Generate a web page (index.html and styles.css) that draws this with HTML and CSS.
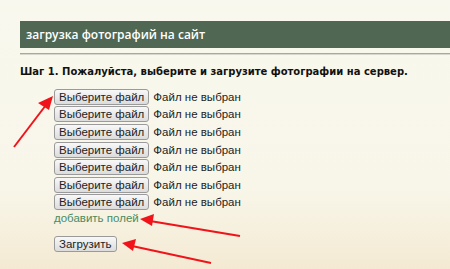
FILE: index.html
```html
<!DOCTYPE html>
<html lang="ru">
<head>
    <meta charset="UTF-8">
    <title>Загрузка фотографий</title>
    <link rel="stylesheet" href="styles.css">
</head>
<body>
    <div class="page">
        <div class="title-bar">загрузка фотографий на сайт</div>
        <div class="title-rule"></div>

        <h3 class="step">Шаг 1. Пожалуйста, выберите и загрузите фотографии на сервер.</h3>

        <form class="upload-form">
            <div class="file-row"><button type="button" class="file-btn">Выберите файл</button><span class="file-name">Файл не выбран</span></div>
            <div class="file-row"><button type="button" class="file-btn">Выберите файл</button><span class="file-name">Файл не выбран</span></div>
            <div class="file-row"><button type="button" class="file-btn">Выберите файл</button><span class="file-name">Файл не выбран</span></div>
            <div class="file-row"><button type="button" class="file-btn">Выберите файл</button><span class="file-name">Файл не выбран</span></div>
            <div class="file-row"><button type="button" class="file-btn">Выберите файл</button><span class="file-name">Файл не выбран</span></div>
            <div class="file-row"><button type="button" class="file-btn">Выберите файл</button><span class="file-name">Файл не выбран</span></div>
            <div class="file-row"><button type="button" class="file-btn">Выберите файл</button><span class="file-name">Файл не выбран</span></div>
            <a class="add-fields" href="#">добавить полей</a>
            <button type="button" class="submit-btn">Загрузить</button>
        </form>
    </div>

    <!-- red annotation arrows -->
    <svg class="arrows" width="450" height="269" viewBox="0 0 450 269">
        <g stroke="#f0141a" stroke-width="2" fill="#f0141a">
            <line x1="14" y1="147" x2="46" y2="105"/>
            <polygon points="53,96 38,103 49,110" stroke="none"/>
            <line x1="240" y1="236" x2="150" y2="221"/>
            <polygon points="140,219 154,214 152,226" stroke="none"/>
            <line x1="211" y1="263" x2="132" y2="246"/>
            <polygon points="122,243 136,239 133,251" stroke="none"/>
        </g>
    </svg>
</body>
</html>
```

FILE: styles.css
```css
body {
    margin: 0;
    width: 450px;
    height: 269px;
    overflow: hidden;
    background: linear-gradient(#f9f8ee 0%, #f8f6e9 70%, #f4ead3 100%);
    font-family: "Liberation Sans", Arial, sans-serif;
    color: #222;
    position: relative;
}
.page {
    padding: 21px 0 0 20px;
}
.title-bar {
    height: 27px;
    line-height: 27px;
    background-color: #4f6753;
    color: #fff;
    font-family: "Open Sans", sans-serif;
    font-size: 12px;
    font-weight: 600;
    padding-left: 6px;
}
.title-rule {
    margin-top: 5px;
    border-top: 1px solid #a9a8a0;
    border-bottom: 1px solid #d8d7cf;
}
.step {
    margin: 11px 0 11px;
    font-family: "DejaVu Sans", Verdana, sans-serif;
    font-size: 10px;
    font-weight: bold;
    color: #111;
}
.upload-form {
    padding-left: 34px;
    display: flex;
    flex-direction: column;
    align-items: flex-start;
}
.file-row {
    height: 17.6px;
    display: flex;
    align-items: center;
    font-size: 11.5px;
}
.file-btn,
.submit-btn {
    height: 16px;
    padding: 0 4px;
    border: 1px solid #9a9a9a;
    border-radius: 3px;
    background: linear-gradient(#f8f8f8, #dcdcdc);
    font-family: "Liberation Sans", Arial, sans-serif;
    font-size: 11.5px;
    line-height: 14px;
    color: #222;
}
.file-name {
    margin-left: 4px;
    color: #222;
}
.add-fields {
    margin-top: 1px;
    font-size: 11.5px;
    color: #4a8a62;
    text-decoration: none;
}
.submit-btn {
    margin-top: 12px;
}
.arrows {
    position: absolute;
    left: 0;
    top: 0;
}
```
